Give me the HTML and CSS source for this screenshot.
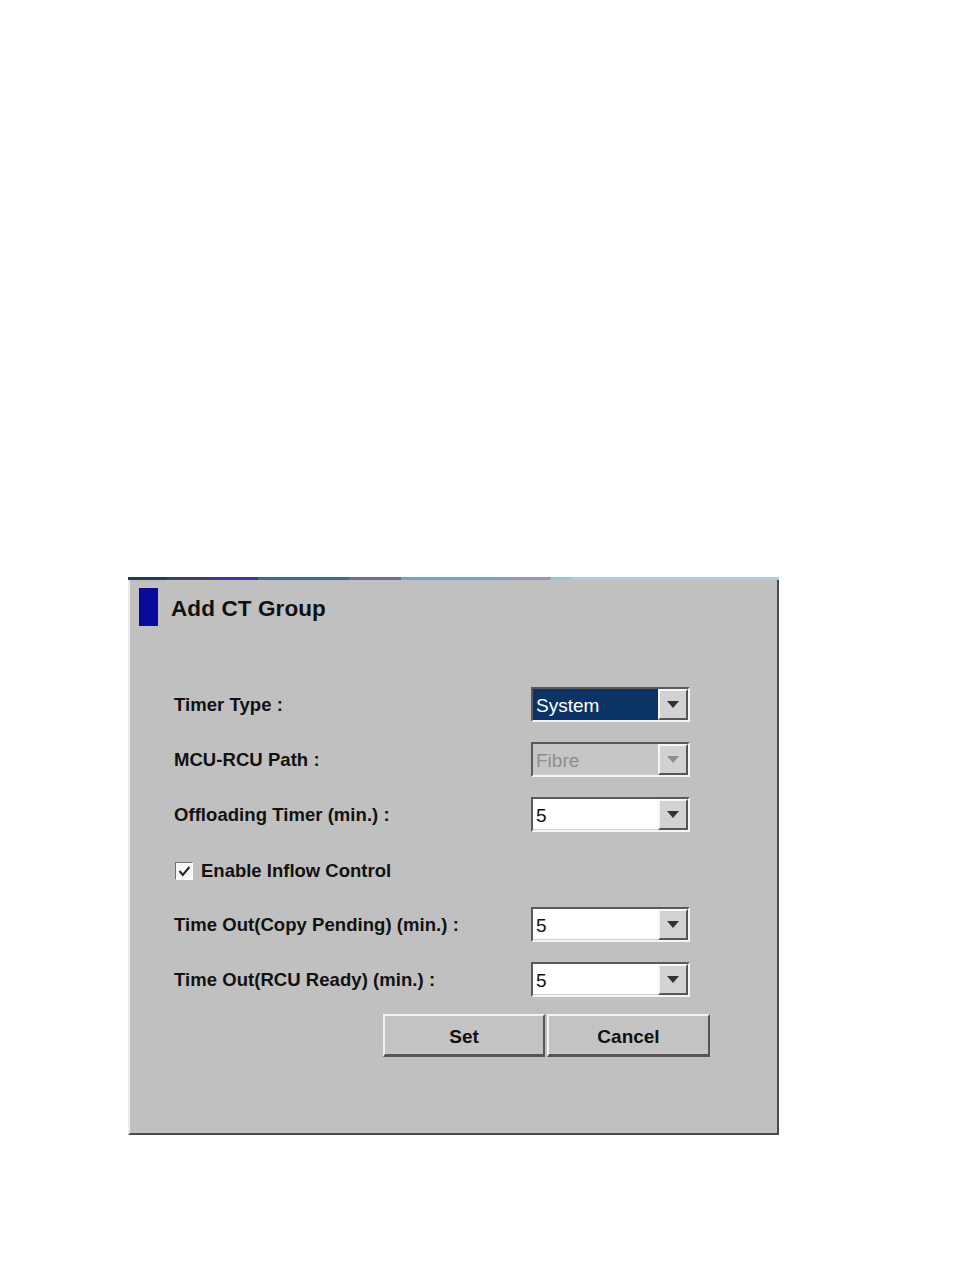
FILE: index.html
```html
<!DOCTYPE html>
<html>
<head>
<meta charset="utf-8">
<title>Add CT Group</title>
<link rel="stylesheet" href="styles.css">
</head>
<body>
<div class="dialog">
  <div class="topstrip"></div>
  <div class="header">
    <div class="marker"></div>
    <div class="title">Add CT Group</div>
  </div>
  <div class="form">
    <div class="label">Timer Type :</div>
    <div class="combo selected"><span class="value">System</span><span class="arrow"><i></i></span></div>

    <div class="label">MCU-RCU Path :</div>
    <div class="combo disabled"><span class="value">Fibre</span><span class="arrow"><i></i></span></div>

    <div class="label">Offloading Timer (min.) :</div>
    <div class="combo"><span class="value">5</span><span class="arrow"><i></i></span></div>

    <div class="check-row">
      <span class="checkbox"><svg viewBox="0 0 13 13" width="13" height="13"><path d="M1.5 6 L4.8 10 L11.5 2" fill="none" stroke="#222" stroke-width="2"/></svg></span>
      <span class="check-label">Enable Inflow Control</span>
    </div>

    <div class="label">Time Out(Copy Pending) (min.) :</div>
    <div class="combo"><span class="value">5</span><span class="arrow"><i></i></span></div>

    <div class="label">Time Out(RCU Ready) (min.) :</div>
    <div class="combo"><span class="value">5</span><span class="arrow"><i></i></span></div>
  </div>
  <div class="buttons">
    <button class="btn">Set</button>
    <button class="btn">Cancel</button>
  </div>
</div>
</body>
</html>
```
FILE: styles.css
```css
html, body {
  margin: 0;
  padding: 0;
  background: #ffffff;
}
body {
  font-family: "Liberation Sans", Arial, sans-serif;
  color: #000;
}
.dialog {
  margin-top: 577px;
  margin-left: 128px;
  width: 651px;
  height: 558px;
  box-sizing: border-box;
  background: #c0c0c0;
  border-left: 2px solid #ececec;
  border-right: 2px solid #4a4a4a;
  border-bottom: 2px solid #4a4a4a;
  display: flex;
  flex-direction: column;
}
.topstrip {
  height: 3px;
  margin-left: -2px;
  margin-right: -2px;
  background: linear-gradient(to right,
    #1f3a62 0%, #1f3a62 6%,
    #3c3c70 6%, #3c3c70 13%,
    #3838a0 13%, #3838a0 20%,
    #3a6a9a 20%, #3a6a9a 34%,
    #6a6aa8 34%, #6a6aa8 42%,
    #72a2d2 42%, #72a2d2 57%,
    #9494c8 57%, #9494c8 65%,
    #94cccc 65%, #94cccc 68%,
    #a4ccf2 68%, #a4ccf2 100%);
}
.header {
  display: flex;
  align-items: center;
  margin-top: 8px;
  padding-left: 9px;
  height: 38px;
}
.marker {
  width: 19px;
  height: 38px;
  background: #0a0a9a;
}
.title {
  margin-left: 13px;
  padding-top: 4px;
  font-size: 22.5px;
  font-weight: bold;
  letter-spacing: 0.1px;
  color: #111;
}
.form {
  margin-top: 61px;
  padding-left: 44px;
  display: grid;
  grid-template-columns: 357px 159px;
  grid-auto-rows: 35px;
  row-gap: 20px;
  align-items: center;
}
.label {
  font-size: 18.5px;
  font-weight: bold;
  letter-spacing: 0.05px;
  color: #111;
}
.combo {
  height: 35px;
  box-sizing: border-box;
  display: flex;
  background: #ffffff;
  border-top: 2px solid #5a5a5a;
  border-left: 2px solid #5a5a5a;
  border-right: 2px solid #f4f4f4;
  border-bottom: 2px solid #f4f4f4;
  box-shadow: inset -1px -1px 0 #d0d0d0;
}
.combo .value {
  flex: 1;
  display: flex;
  align-items: center;
  padding-left: 3px;
  padding-top: 3px;
  font-size: 19px;
  color: #111;
}
.combo.selected .value {
  background: #0b3366;
  color: #ffffff;
}
.combo.disabled {
  background: #c6c6c6;
}
.combo.disabled .value {
  color: #8e8e8e;
}
.combo .arrow {
  width: 30px;
  box-sizing: border-box;
  background: #d2d2d2;
  border-top: 2px solid #f6f6f6;
  border-left: 2px solid #f6f6f6;
  border-right: 2px solid #555555;
  border-bottom: 2px solid #555555;
  display: flex;
  align-items: center;
  justify-content: center;
}
.combo .arrow i {
  width: 0;
  height: 0;
  border-left: 6px solid transparent;
  border-right: 6px solid transparent;
  border-top: 7px solid #333333;
}
.combo.disabled .arrow i {
  border-top-color: #8e8e8e;
}
.check-row {
  grid-column: 1 / span 2;
  display: flex;
  align-items: center;
  padding-left: 1px;
  padding-top: 3px;
}
.checkbox {
  width: 18px;
  height: 18px;
  box-sizing: border-box;
  background: #f8f8f8;
  border-top: 1px solid #707070;
  border-left: 1px solid #707070;
  border-right: 1px solid #ffffff;
  border-bottom: 1px solid #ffffff;
  display: flex;
  align-items: center;
  justify-content: center;
}
.check-label {
  margin-left: 8px;
  font-size: 18.5px;
  font-weight: bold;
  letter-spacing: 0;
  color: #111;
}
.buttons {
  margin-top: 17px;
  padding-left: 253px;
  display: flex;
  gap: 2px;
}
.btn {
  width: 162px;
  height: 43px;
  box-sizing: border-box;
  background: #c3c3c3;
  border-top: 2px solid #f2f2f2;
  border-left: 2px solid #f2f2f2;
  border-right: 2px solid #555555;
  border-bottom: 3px solid #555555;
  font-family: "Liberation Sans", Arial, sans-serif;
  font-size: 19px;
  font-weight: bold;
  color: #111;
  padding: 4px 0 0 0;
}
.btn + .btn {
  width: 163px;
}
```
